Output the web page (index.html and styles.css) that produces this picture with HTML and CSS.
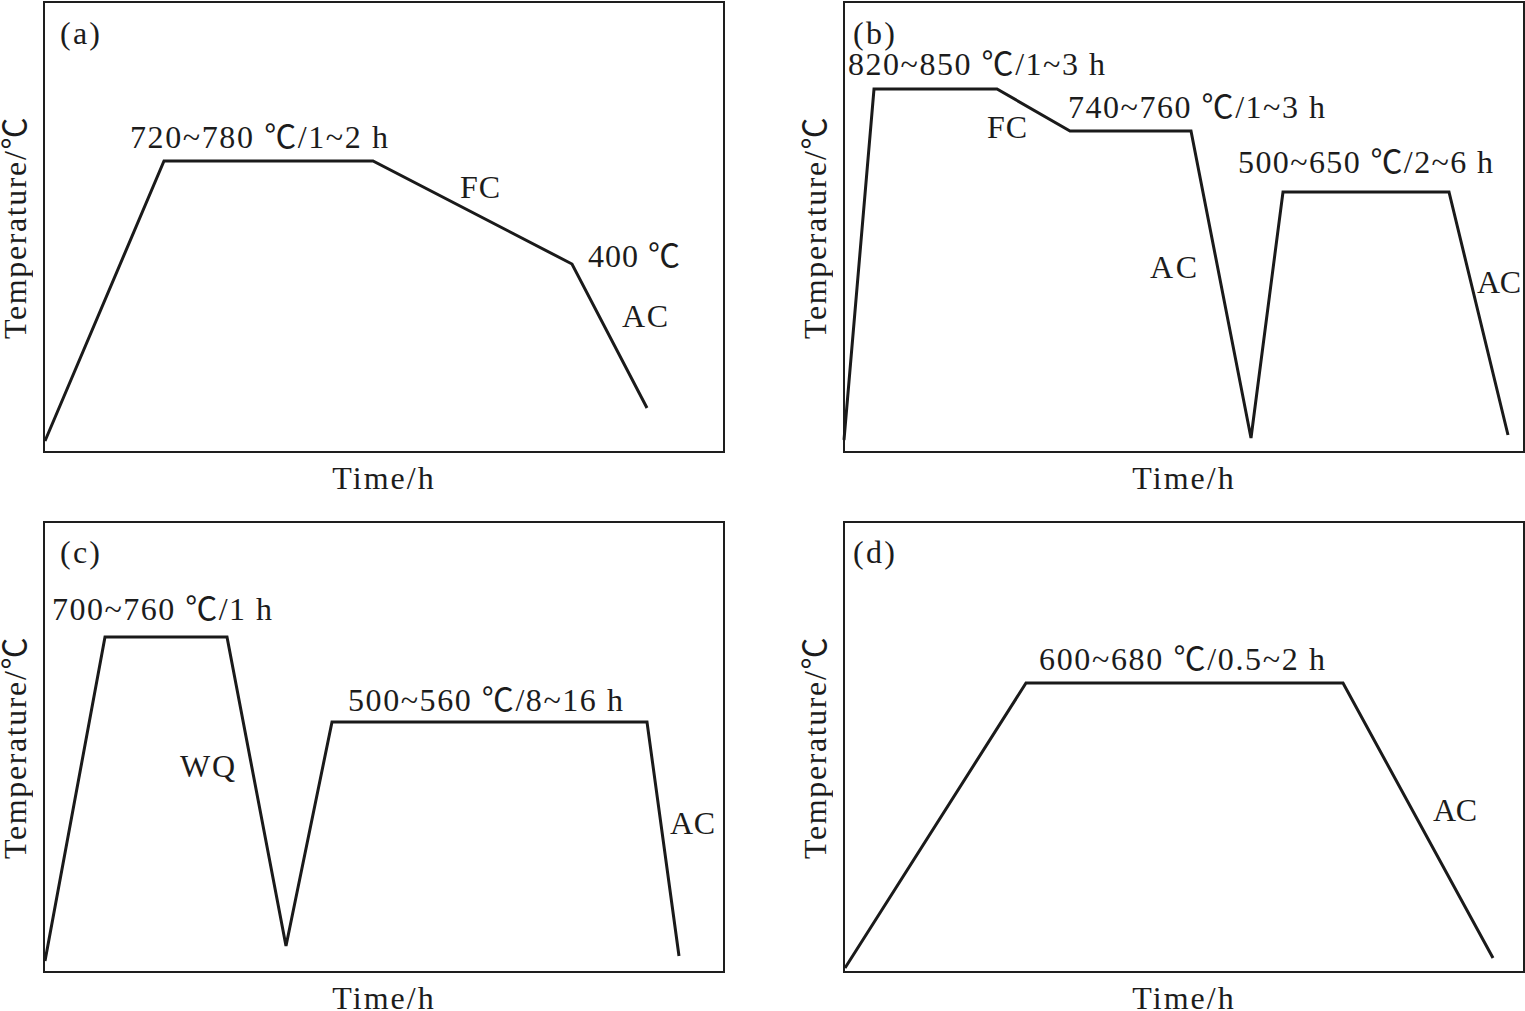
FILE: index.html
```html
<!DOCTYPE html>
<html lang="en">
<head>
<meta charset="utf-8">
<title>Heat treatment schedules</title>
<link rel="stylesheet" href="styles.css">
</head>
<body>
<main class="figure">
  <figure class="panel">
    <div class="ylabel"><span>Temperature/℃</span></div>
    <div class="plot">
      <svg width="678" height="448" viewBox="45 3 678 448">
        <polyline class="curve" points="45,441 164,161 373,161 572,264 647,408"/>
        <text class="lbl" x="60" y="44" textLength="40" lengthAdjust="spacing">(a)</text>
        <text class="lbl" x="130" y="148" textLength="258" lengthAdjust="spacing">720~780 ℃/1~2 h</text>
        <text class="lbl" x="460" y="198" textLength="40" lengthAdjust="spacing">FC</text>
        <text class="lbl" x="588" y="267" textLength="92" lengthAdjust="spacing">400 ℃</text>
        <text class="lbl" x="622" y="327" textLength="46" lengthAdjust="spacing">AC</text>
      </svg>
    </div>
    <div class="xlabel">Time/h</div>
  </figure>

  <figure class="panel">
    <div class="ylabel"><span>Temperature/℃</span></div>
    <div class="plot">
      <svg width="678" height="448" viewBox="845 3 678 448">
        <polyline class="curve" points="844,440 874,89 997,89 1070,131 1191,131 1251,438 1283,192 1449,192 1508,435"/>
        <text class="lbl" x="853" y="44" textLength="42" lengthAdjust="spacing">(b)</text>
        <text class="lbl" x="848" y="75" textLength="257" lengthAdjust="spacing">820~850 ℃/1~3 h</text>
        <text class="lbl" x="987" y="138" textLength="40" lengthAdjust="spacing">FC</text>
        <text class="lbl" x="1068" y="118" textLength="257" lengthAdjust="spacing">740~760 ℃/1~3 h</text>
        <text class="lbl" x="1238" y="173" textLength="255" lengthAdjust="spacing">500~650 ℃/2~6 h</text>
        <text class="lbl" x="1150" y="278" textLength="47" lengthAdjust="spacing">AC</text>
        <text class="lbl" x="1477" y="293" textLength="44" lengthAdjust="spacing">AC</text>
      </svg>
    </div>
    <div class="xlabel">Time/h</div>
  </figure>

  <figure class="panel">
    <div class="ylabel"><span>Temperature/℃</span></div>
    <div class="plot">
      <svg width="678" height="448" viewBox="45 523 678 448">
        <polyline class="curve" points="45,961 105,637 227,637 286,946 332,722 647,722 679,956"/>
        <text class="lbl" x="60" y="563" textLength="40" lengthAdjust="spacing">(c)</text>
        <text class="lbl" x="52" y="620" textLength="220" lengthAdjust="spacing">700~760 ℃/1 h</text>
        <text class="lbl" x="180" y="777" textLength="55" lengthAdjust="spacing">WQ</text>
        <text class="lbl" x="348" y="711" textLength="275" lengthAdjust="spacing">500~560 ℃/8~16 h</text>
        <text class="lbl" x="670" y="834" textLength="45" lengthAdjust="spacing">AC</text>
      </svg>
    </div>
    <div class="xlabel">Time/h</div>
  </figure>

  <figure class="panel">
    <div class="ylabel"><span>Temperature/℃</span></div>
    <div class="plot">
      <svg width="678" height="448" viewBox="845 523 678 448">
        <polyline class="curve" points="845,968 1026,683 1343,683 1493,958"/>
        <text class="lbl" x="853" y="563" textLength="42" lengthAdjust="spacing">(d)</text>
        <text class="lbl" x="1039" y="670" textLength="286" lengthAdjust="spacing">600~680 ℃/0.5~2 h</text>
        <text class="lbl" x="1433" y="821" textLength="44" lengthAdjust="spacing">AC</text>
      </svg>
    </div>
    <div class="xlabel">Time/h</div>
  </figure>
</main>
</body>
</html>
```

FILE: styles.css
```css
html, body {
  margin: 0;
  padding: 0;
  background: #ffffff;
}

body {
  width: 1525px;
  height: 1011px;
  overflow: hidden;
  color: #1c1c1c;
  font-family: "Liberation Serif", "Noto Sans CJK SC", serif;
}

.figure {
  display: grid;
  grid-template-columns: 725px 725px;
  grid-template-rows: 520px 490px;
  column-gap: 75px;
  padding-top: 1px;
  margin: 0;
}

.panel {
  margin: 0;
  display: grid;
  grid-template-columns: 43px 682px;
  grid-template-rows: 452px auto;
}

.ylabel {
  grid-column: 1;
  grid-row: 1;
  display: flex;
  align-items: center;
  justify-content: flex-start;
}

.ylabel span {
  writing-mode: vertical-rl;
  text-orientation: sideways;
  transform: rotate(180deg);
  font-size: 32px;
  line-height: 30px;
  letter-spacing: 1.6px;
  white-space: nowrap;
}

.plot {
  grid-column: 2;
  grid-row: 1;
  border: 2px solid #1e1e1e;
  box-sizing: border-box;
  width: 682px;
  height: 452px;
}

.plot svg {
  display: block;
  overflow: visible;
}

.curve {
  fill: none;
  stroke: #1a1a1a;
  stroke-width: 3;
  stroke-linejoin: miter;
}

.lbl {
  font-family: "Liberation Serif", "Noto Sans CJK SC", serif;
  font-size: 32px;
  fill: #1c1c1c;
}

.xlabel {
  grid-column: 2;
  grid-row: 2;
  text-align: center;
  font-size: 32px;
  line-height: 30px;
  letter-spacing: 2px;
  padding-top: 10px;
}
```
